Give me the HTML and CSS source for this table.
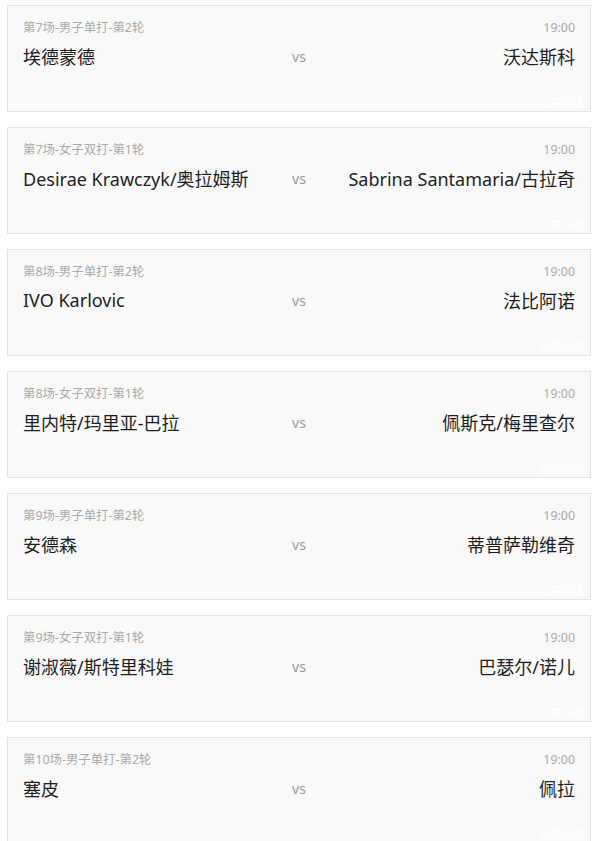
FILE: index.html
```html
<!DOCTYPE html>
<html lang="zh">
<head>
<meta charset="utf-8">
<link rel="stylesheet" href="styles.css">
</head>
<body>
<div class="list">
  <div class="card">
    <div class="meta"><span>第7场-男子单打-第2轮</span><span>19:00</span></div>
    <div class="row"><span class="name">埃德蒙德</span><span class="vs">vs</span><span class="name right">沃达斯科</span></div>
    <span class="mark">比赛没结</span>
  </div>
  <div class="card">
    <div class="meta"><span>第7场-女子双打-第1轮</span><span>19:00</span></div>
    <div class="row"><span class="name">Desirae Krawczyk/奥拉姆斯</span><span class="vs">vs</span><span class="name right">Sabrina Santamaria/古拉奇</span></div>
    <span class="mark">比赛没结</span>
  </div>
  <div class="card">
    <div class="meta"><span>第8场-男子单打-第2轮</span><span>19:00</span></div>
    <div class="row"><span class="name">IVO Karlovic</span><span class="vs">vs</span><span class="name right">法比阿诺</span></div>
    <span class="mark">比赛没结</span>
  </div>
  <div class="card">
    <div class="meta"><span>第8场-女子双打-第1轮</span><span>19:00</span></div>
    <div class="row"><span class="name">里内特/玛里亚-巴拉</span><span class="vs">vs</span><span class="name right">佩斯克/梅里查尔</span></div>
    <span class="mark">比赛没结</span>
  </div>
  <div class="card">
    <div class="meta"><span>第9场-男子单打-第2轮</span><span>19:00</span></div>
    <div class="row"><span class="name">安德森</span><span class="vs">vs</span><span class="name right">蒂普萨勒维奇</span></div>
    <span class="mark">比赛没结</span>
  </div>
  <div class="card">
    <div class="meta"><span>第9场-女子双打-第1轮</span><span>19:00</span></div>
    <div class="row"><span class="name">谢淑薇/斯特里科娃</span><span class="vs">vs</span><span class="name right">巴瑟尔/诺儿</span></div>
    <span class="mark">比赛没结</span>
  </div>
  <div class="card">
    <div class="meta"><span>第10场-男子单打-第2轮</span><span>19:00</span></div>
    <div class="row"><span class="name">塞皮</span><span class="vs">vs</span><span class="name right">佩拉</span></div>
    <span class="mark">比赛没结</span>
  </div>
</div>
</body>
</html>
```

FILE: styles.css
```css
html, body {
  margin: 0;
  padding: 0;
  background: #ffffff;
}
body {
  font-family: "Noto Sans", "Noto Sans CJK SC", sans-serif;
}
.list {
  display: flex;
  flex-direction: column;
  gap: 15px;
  padding: 5px 5px 0 7px;
}
.card {
  position: relative;
  box-sizing: border-box;
  height: 107px;
  background: #f9f9f9;
  border: 1px solid #e3e3e3;
  padding: 14px 15px 0 15px;
  overflow: hidden;
}
.meta {
  display: flex;
  justify-content: space-between;
  font-size: 12.4px;
  line-height: 16px;
  color: #aaaaaa;
}
.row {
  display: grid;
  grid-template-columns: 1fr auto 1fr;
  align-items: center;
  margin-top: 7px;
  height: 26px;
}
.name {
  font-size: 18px;
  color: #1e1e1e;
  white-space: nowrap;
}
.name.right {
  text-align: right;
}
.vs {
  font-size: 14px;
  color: #9a9a9a;
}
.mark {
  position: absolute;
  right: 6px;
  bottom: 2px;
  font-size: 11px;
  line-height: 13px;
  color: #ffffff;
  font-family: "Noto Sans CJK SC", sans-serif;
}
```
